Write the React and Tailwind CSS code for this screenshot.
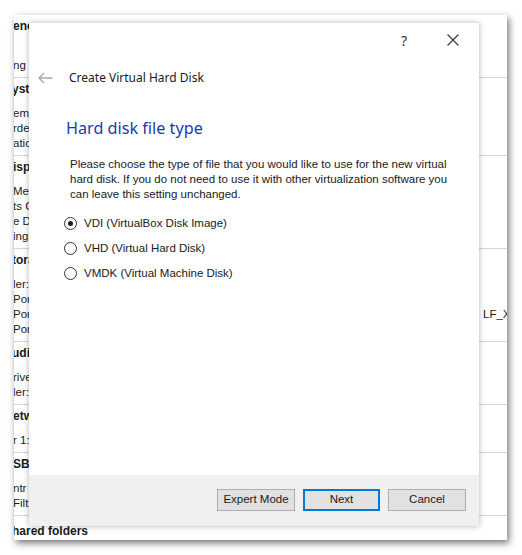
import React from "react";

const sections = [
  { h: "ene", hx: "-ml-[1px]", rows: [["", ""], ["ng", ""]] },
  { h: "yste", hx: "-ml-[2px]", rows: [["em", ""], ["rde", ""], ["atic", ""]] },
  { h: "ispl", hx: "-ml-[1px]", rows: [["Men", ""], ["ts C", ""], ["e De", ""], ["ing:", ""]] },
  { h: "tora", hx: "-ml-[2px]", rows: [["ler:", ""], ["Por", ""], ["Por", "LF_X2"], ["Por", ""]] },
  { h: "udi", hx: "-ml-[2px]", rows: [["rive", ""], ["ler:", ""]] },
  { h: "etw", hx: "-ml-[1px]", rows: [["r 1:", ""]] },
  { h: "SB", hx: "-ml-[1px]", rows: [["ntr", ""], ["Filt", ""]] },
];

const tahoma = { fontFamily: '"Liberation Sans", Arial, sans-serif' };

function Radio({ checked, label }) {
  return (
    <div className="flex items-center h-[25px]">
      <div className="ml-[35px] w-[13px] h-[13px] rounded-full border border-[#333333] bg-white flex items-center justify-center">
        {checked && <div className="w-[5px] h-[5px] rounded-full bg-[#1a1a1a]" />}
      </div>
      <span className="ml-[7px] text-[11.5px] text-[#1a1a1a]">{label}</span>
    </div>
  );
}

export default function App() {
  return (
    <div className="relative w-[522px] h-[555px] bg-white overflow-hidden" style={tahoma}>
      {/* background VirtualBox window */}
      <div className="absolute left-[14px] top-[15px] w-[493px] h-[525px] bg-white overflow-hidden shadow-[2px_3px_7px_rgba(0,0,0,0.55)] text-[11.5px] text-[#1a1a1a]">
        {sections.map((s, i) => (
          <div key={i} className="border-b border-[#d4d4d4] pt-[4px] pb-[4px]">
            <div className={"h-[15px] leading-[15px] text-[12px] font-bold whitespace-nowrap " + s.hx}>{s.h}</div>
            <div className="mt-[9px]">
              {s.rows.map((r, j) => (
                <div key={j} className="flex h-[15px] leading-[15px] whitespace-nowrap">
                  <div className="w-[470px] -ml-[1px] shrink-0">{r[0]}</div>
                  <div>{r[1]}</div>
                </div>
              ))}
            </div>
          </div>
        ))}
        <div className="pt-[8px] h-[15px] leading-[15px] text-[12px] font-bold whitespace-nowrap -ml-[2px]">hared folders</div>
      </div>

      {/* dialog */}
      <div className="absolute left-[29px] top-[23px] w-[450px] h-[503px] bg-white flex flex-col shadow-[0_0_6px_rgba(0,0,0,0.3)]">
        <div className="h-[34px] flex justify-end items-center shrink-0">
          <div className="w-[46px] flex justify-center text-[14px] text-[#333]" style={{ fontFamily: '"Noto Sans", sans-serif' }}>?</div>
          <div className="w-[52px] flex justify-center">
            <svg width="12" height="12" viewBox="0 0 12 12">
              <path d="M0.5 0.5L11.5 11.5M11.5 0.5L0.5 11.5" stroke="#333" strokeWidth="1.1" fill="none" />
            </svg>
          </div>
        </div>

        <div className="flex items-center h-[22px] mt-[10px]">
          <svg className="ml-[9px]" width="15" height="12" viewBox="0 0 15 12">
            <path d="M14.5 6H1.2M6 1L1 6l5 5" stroke="#a8a8a8" strokeWidth="1.4" fill="none" />
          </svg>
          <span className="ml-[16px] text-[12px] text-[#1a1a1a]" style={{ fontFamily: '"Noto Sans", sans-serif' }}>
            Create Virtual Hard Disk
          </span>
        </div>

        <div className="ml-[37px] mt-[27px] text-[16.2px] leading-[24px] text-[#1b3aae]" style={{ fontFamily: '"Noto Sans", sans-serif' }}>
          Hard disk file type
        </div>

        <div className="ml-[41px] mt-[17px] text-[11.5px] leading-[15px] text-[#1a1a1a] whitespace-nowrap">
          Please choose the type of file that you would like to use for the new virtual
          <br />
          hard disk. If you do not need to use it with other virtualization software you
          <br />
          can leave this setting unchanged.
        </div>

        <div className="mt-[9px] flex flex-col">
          <Radio checked label="VDI (VirtualBox Disk Image)" />
          <Radio label="VHD (Virtual Hard Disk)" />
          <Radio label="VMDK (Virtual Machine Disk)" />
        </div>

        <div className="flex-1" />

        <div className="h-[51px] bg-[#f0f0f0] flex justify-end items-start pt-[14px] pr-[13px] gap-[8px] shrink-0">
          <button className="w-[78px] h-[22px] bg-[#e1e1e1] border border-[#adadad] text-[11.5px] text-[#1a1a1a]">Expert Mode</button>
          <button className="w-[77px] h-[22px] bg-[#e1e1e1] border border-[#0078d7] shadow-[inset_0_0_0_1px_#0078d7] text-[11.5px] text-[#1a1a1a]">Next</button>
          <button className="w-[78px] h-[22px] bg-[#e1e1e1] border border-[#adadad] text-[11.5px] text-[#1a1a1a]">Cancel</button>
        </div>
      </div>
    </div>
  );
}
